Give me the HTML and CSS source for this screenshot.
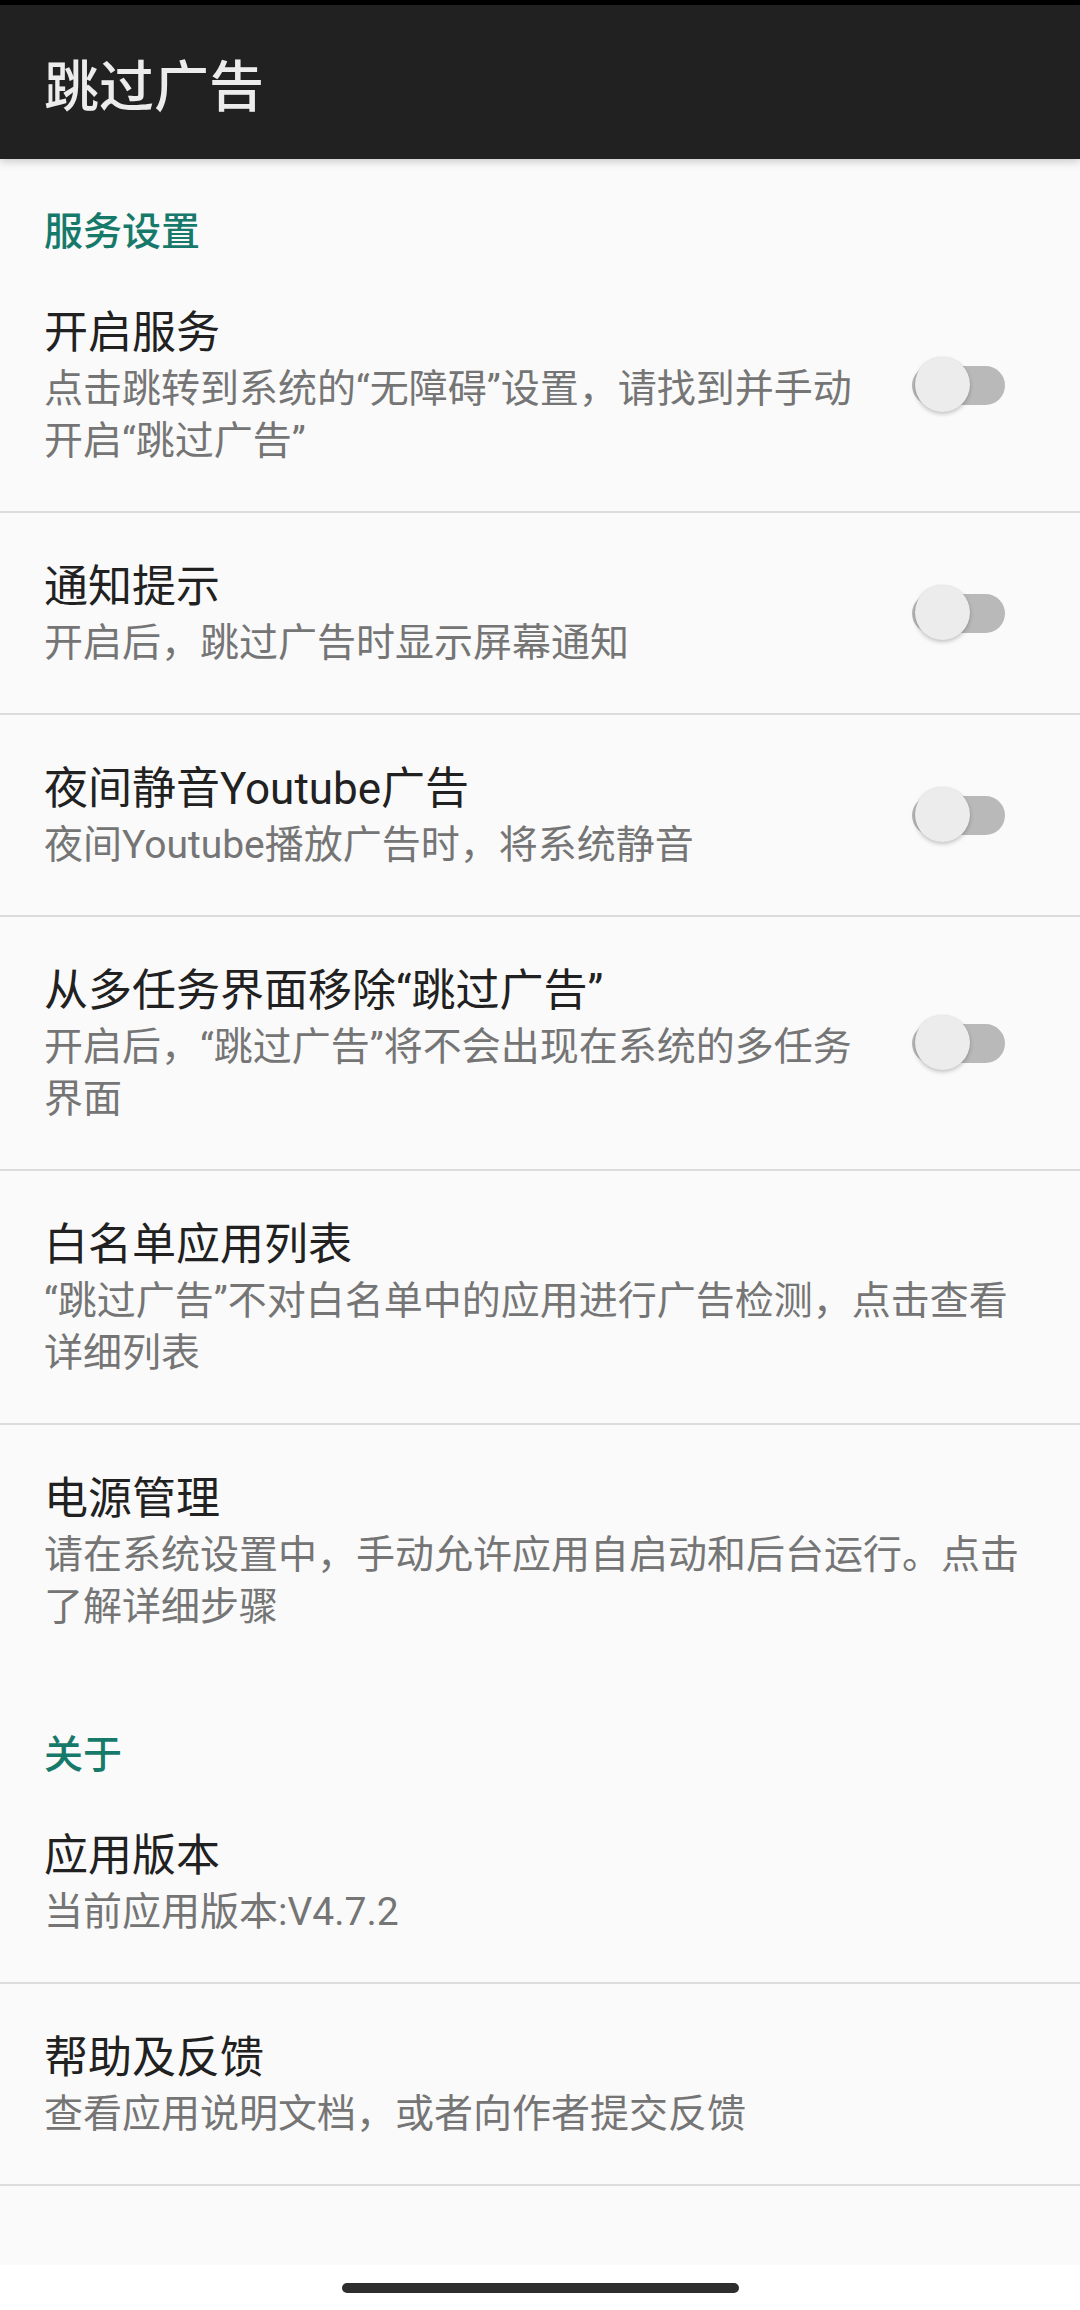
FILE: index.html
```html
<!DOCTYPE html>
<html lang="zh-CN">
<head>
<meta charset="utf-8">
<title>跳过广告</title>
<link rel="stylesheet" href="styles.css">
</head>
<body>
<div class="statusbar"></div>
<header class="appbar"><h1 class="appbar-title">跳过广告</h1></header>
<main class="content">
  <section class="group">
    <h2 class="category">服务设置</h2>
    <div class="pref">
      <div class="pref-text">
        <div class="pref-title">开启服务</div>
        <div class="pref-summary">点击跳转到系统的“无障碍”设置，请找到并手动开启“跳过广告”</div>
      </div>
      <div class="switch"><span class="track"></span><span class="thumb"></span></div>
    </div>
    <div class="pref">
      <div class="pref-text">
        <div class="pref-title">通知提示</div>
        <div class="pref-summary">开启后，跳过广告时显示屏幕通知</div>
      </div>
      <div class="switch"><span class="track"></span><span class="thumb"></span></div>
    </div>
    <div class="pref">
      <div class="pref-text">
        <div class="pref-title">夜间静音Youtube广告</div>
        <div class="pref-summary">夜间Youtube播放广告时，将系统静音</div>
      </div>
      <div class="switch"><span class="track"></span><span class="thumb"></span></div>
    </div>
    <div class="pref">
      <div class="pref-text">
        <div class="pref-title">从多任务界面移除“跳过广告”</div>
        <div class="pref-summary">开启后，“跳过广告”将不会出现在系统的多任务界面</div>
      </div>
      <div class="switch"><span class="track"></span><span class="thumb"></span></div>
    </div>
    <div class="pref pref-wide">
      <div class="pref-text">
        <div class="pref-title">白名单应用列表</div>
        <div class="pref-summary">“跳过广告”不对白名单中的应用进行广告检测，点击查看详细列表</div>
      </div>
    </div>
    <div class="pref pref-wide pref-last">
      <div class="pref-text">
        <div class="pref-title">电源管理</div>
        <div class="pref-summary">请在系统设置中，手动允许应用自启动和后台运行。点击了解详细步骤</div>
      </div>
    </div>
  </section>
  <section class="group">
    <h2 class="category">关于</h2>
    <div class="pref pref-wide">
      <div class="pref-text">
        <div class="pref-title">应用版本</div>
        <div class="pref-summary">当前应用版本:V4.7.2</div>
      </div>
    </div>
    <div class="pref pref-wide">
      <div class="pref-text">
        <div class="pref-title">帮助及反馈</div>
        <div class="pref-summary">查看应用说明文档，或者向作者提交反馈</div>
      </div>
    </div>
  </section>
</main>
<footer class="navbar"><span class="handle"></span></footer>
</body>
</html>
```

FILE: styles.css
```css
html, body {
  margin: 0;
  padding: 0;
}
body {
  width: 1080px;
  min-height: 2310px;
  display: flex;
  flex-direction: column;
  background: #fafafa;
  font-family: "Roboto", "Noto Sans CJK SC", sans-serif;
}
.statusbar {
  height: 5px;
  background: #000;
}
.appbar {
  height: 154px;
  background: #212121;
  display: flex;
  align-items: center;
  padding-left: 44px;
  box-shadow: 0 3px 8px rgba(0, 0, 0, 0.18);
  position: relative;
  z-index: 2;
}
.appbar-title {
  margin: 0;
  font-family: "Noto Sans CJK SC", sans-serif;
  font-size: 55px;
  font-weight: 500;
  color: #ececec;
  line-height: 1;
}
.content {
  flex: 1;
}
.group {
  display: flex;
  flex-direction: column;
}
.category {
  margin: 0;
  padding: 49px 44px 11px;
  font-family: "Noto Sans CJK SC", sans-serif;
  font-size: 39px;
  line-height: 40px;
  font-weight: 500;
  color: #16796a;
}
.group + .group .category {
  padding-top: 54px;
}
.pref {
  display: flex;
  align-items: center;
  padding: 44px 75px 44px 44px;
  border-bottom: 2px solid #dcdcdc;
}
.pref-wide {
  padding-right: 44px;
}
.pref-last {
  border-bottom: none;
}
.pref-text {
  flex: 1;
  min-width: 0;
}
.pref-title {
  font-size: 44px;
  line-height: 60px;
  color: #212121;
}
.pref-summary {
  font-size: 39px;
  line-height: 52px;
  color: #757575;
}
.switch {
  position: relative;
  width: 93px;
  height: 58px;
  margin-left: 40px;
  flex: none;
  display: flex;
  align-items: center;
}
.track {
  display: block;
  width: 93px;
  height: 39px;
  border-radius: 20px;
  background: #b9b9b9;
}
.thumb {
  position: absolute;
  left: 3px;
  top: 1px;
  width: 55px;
  height: 55px;
  border-radius: 50%;
  background: #ececec;
  box-shadow: 0 2px 4px rgba(0, 0, 0, 0.22), 0 0 1px rgba(0, 0, 0, 0.1);
}
.navbar {
  height: 45px;
  background: #ffffff;
  display: flex;
  justify-content: center;
  padding-top: 18px;
  box-sizing: border-box;
}
.handle {
  display: block;
  width: 397px;
  height: 10px;
  border-radius: 5px;
  background: #2e2e2e;
}
```
